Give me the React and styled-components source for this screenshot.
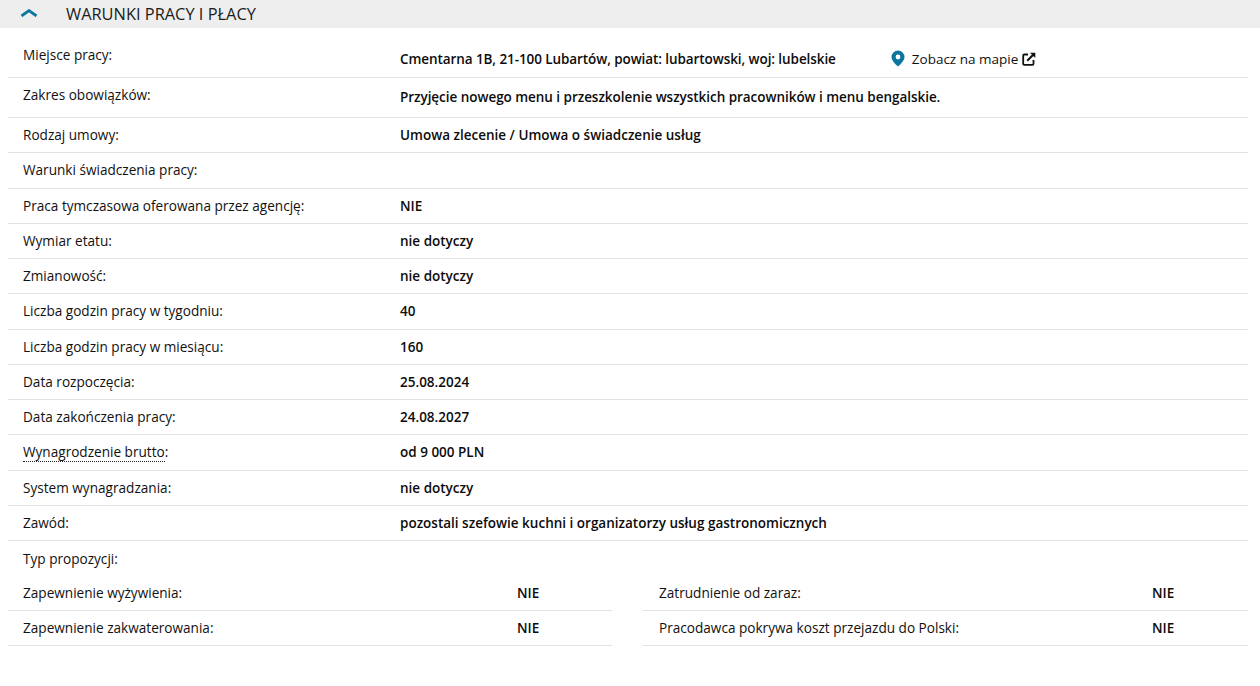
import React from "react";
import styled, { createGlobalStyle } from "styled-components";

const GlobalStyle = createGlobalStyle`
  html, body {
    margin: 0;
    padding: 0;
    background: #fff;
    font-family: "Open Sans", "Noto Sans", sans-serif;
    color: #111;
  }
`;

const Page = styled.div`
  width: 1260px;
  height: 686px;
  overflow: hidden;
`;

const SectionHeader = styled.div`
  height: 28px;
  background: #eeeeee;
  display: flex;
  align-items: center;
  padding-left: 20px;
  gap: 28px;
`;

const SectionTitle = styled.h2`
  margin: -2px 0 0;
  font-size: 16.4px;
  font-weight: 400;
  color: #1c1c1c;
`;

const Table = styled.div`
  margin: 0 12px 0 8px;
`;

const Row = styled.div`
  display: grid;
  grid-template-columns: 377px 1fr;
  height: ${(p) => p.$height || 35.25}px;
  padding-left: 15px;
  padding-top: ${(p) => p.$top || 0}px;
  box-sizing: border-box;
  align-items: ${(p) => (p.$start ? "start" : "center")};
  border-bottom: ${(p) => (p.$plain ? "none" : "1px solid #e2e2e2")};
`;

const Label = styled.div`
  font-size: 13.6px;
  line-height: 18px;
  color: #111;
`;

const DottedTerm = styled.span`
  border-bottom: 1px dotted #222;
`;

const Value = styled.div`
  font-size: 13.5px;
  line-height: 18px;
  font-weight: 600;
  color: #0c0c0c;
  display: flex;
  align-items: center;
  margin-top: ${(p) => p.$shift || 0}px;
  letter-spacing: ${(p) => p.$tracking || 0}px;
`;

const MapLink = styled.a`
  display: inline-flex;
  align-items: center;
  margin-left: 55px;
  font-weight: 400;
  font-size: 13.5px;
  letter-spacing: 0;
  color: #111;
`;

const Columns = styled.div`
  display: grid;
  grid-template-columns: 604px 605px;
  column-gap: 31px;
`;

const PairRow = styled.div`
  display: grid;
  grid-template-columns: ${(p) => p.$labelWidth}px 1fr;
  height: 35px;
  box-sizing: border-box;
  padding-left: ${(p) => p.$inset}px;
  align-items: center;
  border-bottom: 1px solid #e2e2e2;
`;

const ChevronIcon = styled.svg`
  margin-top: -3px;
`;

const Chevron = () => (
  <ChevronIcon width="18" height="8" viewBox="0 0 18 8">
    <path d="M1.5 7 L9 1.6 L16.5 7" fill="none" stroke="#0b76a0" strokeWidth="2.8" />
  </ChevronIcon>
);

const PinIcon = styled.svg`
  margin-right: 7px;
  margin-top: -2px;
`;

const Pin = () => (
  <PinIcon width="14" height="17" viewBox="0 0 14 17">
    <path
      fillRule="evenodd"
      d="M7 0.5a6.5 6.5 0 0 1 6.5 6.5c0 3.6-3.6 6.8-6.5 9.5C4.1 13.8 0.5 10.6 0.5 7A6.5 6.5 0 0 1 7 0.5zM7 4.6a2.4 2.4 0 1 0 0 4.8a2.4 2.4 0 0 0 0-4.8z"
      fill="#0b76a0"
    />
  </PinIcon>
);

const ExternalIcon = styled.svg`
  margin-left: 4px;
`;

const External = () => (
  <ExternalIcon width="14" height="14" viewBox="0 0 14 14">
    <path d="M6 2.5H2.2a1 1 0 0 0-1 1v8.3a1 1 0 0 0 1 1h8.3a1 1 0 0 0 1-1V8" fill="none" stroke="#111" strokeWidth="1.8" />
    <path d="M5.2 8.8L12 2" fill="none" stroke="#111" strokeWidth="2" />
    <path d="M8 0.7h5.3V6z" fill="#111" />
  </ExternalIcon>
);

const rows = [
  ["Rodzaj umowy:", "Umowa zlecenie / Umowa o świadczenie usług"],
  ["Warunki świadczenia pracy:", ""],
  ["Praca tymczasowa oferowana przez agencję:", "NIE"],
  ["Wymiar etatu:", "nie dotyczy"],
  ["Zmianowość:", "nie dotyczy"],
  ["Liczba godzin pracy w tygodniu:", "40"],
  ["Liczba godzin pracy w miesiącu:", "160"],
  ["Data rozpoczęcia:", "25.08.2024"],
  ["Data zakończenia pracy:", "24.08.2027"],
  [<DottedTerm key="w">Wynagrodzenie brutto</DottedTerm>, "od 9 000 PLN", true],
  ["System wynagradzania:", "nie dotyczy"],
  ["Zawód:", "pozostali szefowie kuchni i organizatorzy usług gastronomicznych"],
];

export default function App() {
  return (
    <Page>
      <GlobalStyle />
      <SectionHeader>
        <Chevron />
        <SectionTitle>WARUNKI PRACY I PŁACY</SectionTitle>
      </SectionHeader>
      <Table>
        <Row $height={50} $top={18} $start>
          <Label>Miejsce pracy:</Label>
          <Value $shift={4} $tracking={-0.08}>
            Cmentarna 1B, 21-100 Lubartów, powiat: lubartowski, woj: lubelskie
            <MapLink>
              <Pin />
              Zobacz na mapie
              <External />
            </MapLink>
          </Value>
        </Row>
        <Row $height={40} $top={8} $start>
          <Label>Zakres obowiązków:</Label>
          <Value $shift={2} $tracking={-0.04}>
            Przyjęcie nowego menu i przeszkolenie wszystkich pracowników i menu bengalskie.
          </Value>
        </Row>
        {rows.map(([label, value, colon], i) => (
          <Row key={i}>
            <Label>
              {label}
              {colon ? ":" : ""}
            </Label>
            <Value>{value}</Value>
          </Row>
        ))}
        <Row $plain $height={35}>
          <Label>Typ propozycji:</Label>
        </Row>
        <Columns>
          <div>
            <PairRow $labelWidth={494} $inset={15}>
              <Label>Zapewnienie wyżywienia:</Label>
              <Value>NIE</Value>
            </PairRow>
            <PairRow $labelWidth={494} $inset={15}>
              <Label>Zapewnienie zakwaterowania:</Label>
              <Value>NIE</Value>
            </PairRow>
          </div>
          <div>
            <PairRow $labelWidth={493} $inset={16}>
              <Label>Zatrudnienie od zaraz:</Label>
              <Value>NIE</Value>
            </PairRow>
            <PairRow $labelWidth={493} $inset={16}>
              <Label>Pracodawca pokrywa koszt przejazdu do Polski:</Label>
              <Value>NIE</Value>
            </PairRow>
          </div>
        </Columns>
      </Table>
    </Page>
  );
}
